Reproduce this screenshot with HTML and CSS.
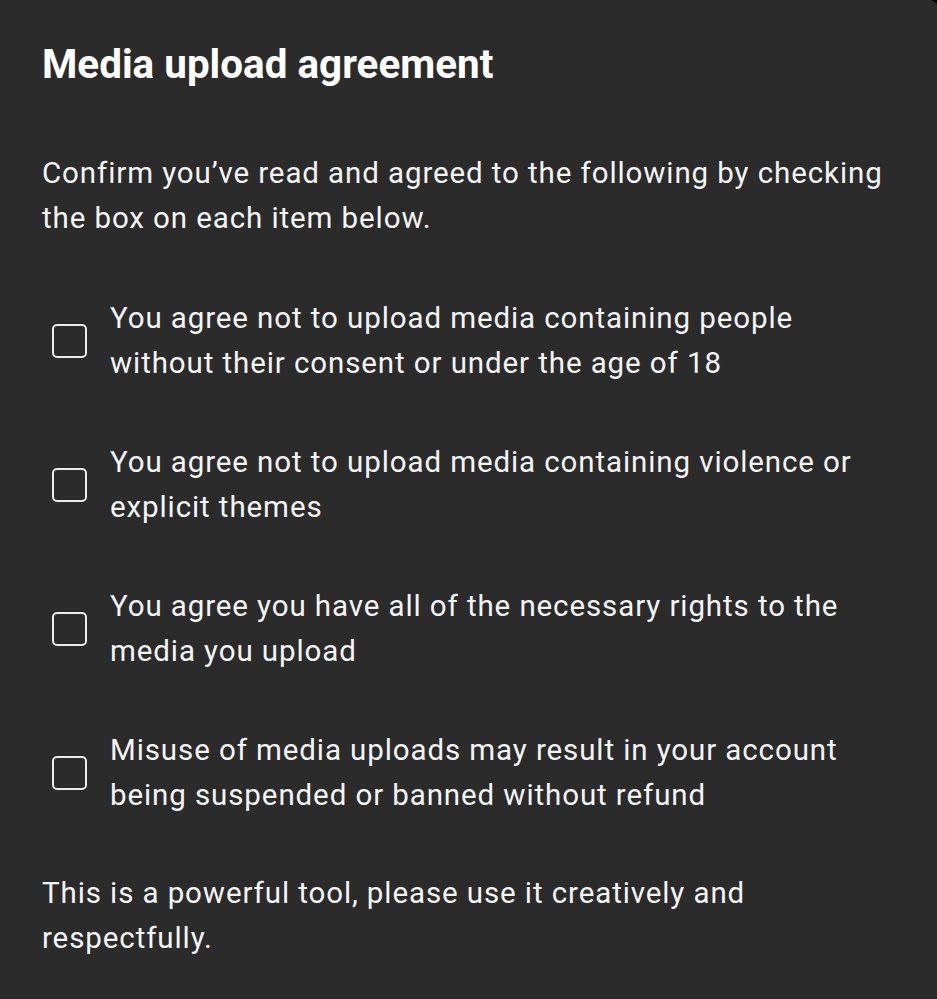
FILE: index.html
```html
<!DOCTYPE html>
<html lang="en">
<head>
<meta charset="utf-8">
<title>Media upload agreement</title>
<link rel="stylesheet" href="styles.css">
</head>
<body>
<div class="dialog">
  <h1 class="title">Media upload agreement</h1>
  <p class="intro">Confirm you’ve read and agreed to the following by checking the box on each item below.</p>
  <ul class="items">
    <li class="item"><span class="box"></span><span class="label">You agree not to upload media containing people without their consent or under the age of 18</span></li>
    <li class="item"><span class="box"></span><span class="label">You agree not to upload media containing violence or explicit themes</span></li>
    <li class="item"><span class="box"></span><span class="label">You agree you have all of the necessary rights to the media you upload</span></li>
    <li class="item"><span class="box"></span><span class="label">Misuse of media uploads may result in your account being suspended or banned without refund</span></li>
  </ul>
  <p class="footer">This is a powerful tool, please use it creatively and respectfully.</p>
</div>
</body>
</html>
```
FILE: styles.css
```css
html, body {
  margin: 0;
  padding: 0;
  background: #000;
  overflow: hidden;
}
body {
  font-family: Roboto, "Liberation Sans", sans-serif;
  color: #f4f4f4;
}
.dialog {
  background: #2b2b2b;
  min-height: 999px;
  margin-right: -2px;
  border-top-right-radius: 10px;
  padding: 41px 44px 0 42px;
  box-sizing: border-box;
}
.title {
  margin: 0;
  font-size: 40.4px;
  line-height: 48px;
  font-weight: 700;
  color: #ffffff;
}
.intro {
  margin: 62px 0 0;
  font-size: 29.5px;
  letter-spacing: 0.9px;
  line-height: 45px;
}
.items {
  list-style: none;
  margin: 55px 0 0;
  padding: 0 0 0 10px;
  display: flex;
  flex-direction: column;
  gap: 54px;
}
.item {
  display: flex;
  align-items: center;
  gap: 23px;
}
.box {
  flex: none;
  width: 35px;
  height: 34px;
  box-sizing: border-box;
  border: 2.5px solid #ececec;
  border-radius: 5px;
}
.label {
  font-size: 29.5px;
  letter-spacing: 0.9px;
  line-height: 45px;
}
.footer {
  margin: 53px 0 0;
  font-size: 29.5px;
  letter-spacing: 0.9px;
  line-height: 45px;
}
```
